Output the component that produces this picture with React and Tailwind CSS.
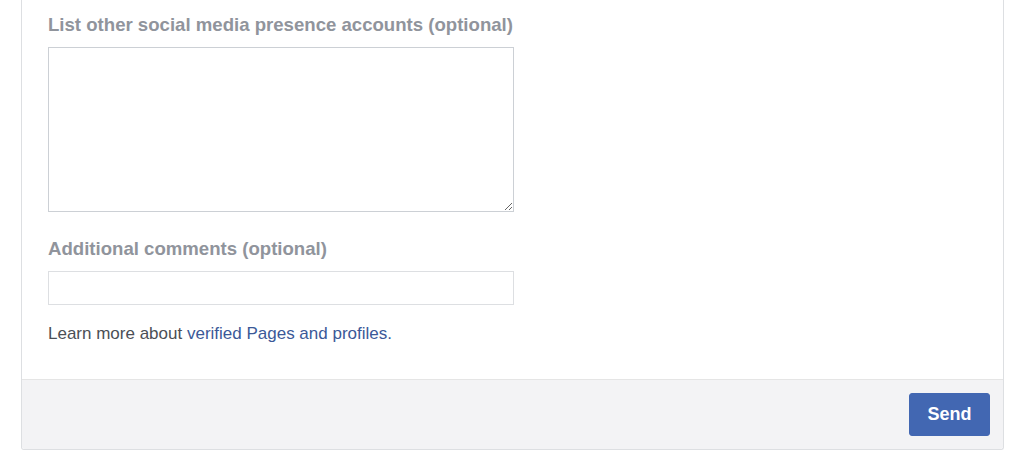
export default function App() {
  return (
    <div className="h-[465px] bg-white pl-[21px] pr-[20px] font-['Liberation_Sans',Arial,sans-serif]">
      <div className="flex flex-col border-x border-b border-[#dddfe2] rounded-b-[3px] bg-white">
        {/* Form body */}
        <div className="pl-[26px] pt-[14px] pb-[35px]">
          <label className="block text-[18.6px] leading-[22px] font-bold text-[#90949c]">
            List other social media presence accounts (optional)
          </label>
          <textarea className="mt-[11px] block w-[466px] h-[165px] border border-[#ccd0d5] bg-white outline-none" />

          <label className="mt-[26px] block text-[18.6px] leading-[22px] font-bold text-[#90949c]">
            Additional comments (optional)
          </label>
          <input
            type="text"
            className="mt-[11px] block w-[466px] h-[34px] border border-[#dddfe2] bg-white outline-none"
          />

          <p className="mt-[19px] text-[17px] leading-[20px] text-[#4b4f56]">
            Learn more about <a className="text-[#3b5998]">verified Pages and profiles.</a>
          </p>
        </div>

        {/* Footer */}
        <div className="flex justify-end border-t border-[#e5e5e5] bg-[#f3f3f5] p-[13px] rounded-b-[3px]">
          <button className="h-[43px] w-[81px] rounded-[3px] border border-[#4267b2] bg-[#4267b2] text-[18px] font-bold text-white">
            Send
          </button>
        </div>
      </div>
    </div>
  );
}
